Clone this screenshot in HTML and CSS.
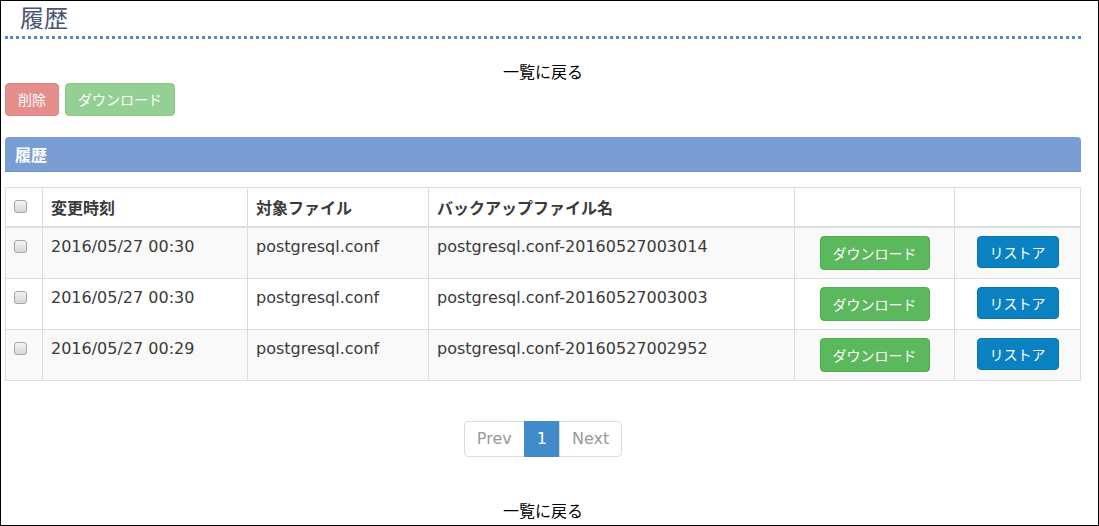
FILE: index.html
```html
<!DOCTYPE html>
<html lang="ja">
<head>
  <meta charset="UTF-8">
  <meta name="viewport" content="width=device-width, initial-scale=1.0">
  <title>履歴</title>
  <link rel="stylesheet" href="styles.css">
</head>
<body>
  <div class="page">
    <h1 class="page-title">履歴</h1>

    <div class="back"><a href="#">一覧に戻る</a></div>

    <div class="actions">
      <button class="btn btn-danger" disabled>削除</button>
      <button class="btn btn-success" disabled>ダウンロード</button>
    </div>

    <div class="panel-heading">履歴</div>

    <table class="table">
      <thead>
        <tr>
          <th class="col-check"><input type="checkbox" class="check"></th>
          <th class="col-date">変更時刻</th>
          <th class="col-file">対象ファイル</th>
          <th class="col-backup">バックアップファイル名</th>
          <th class="col-dl"></th>
          <th class="col-restore"></th>
        </tr>
      </thead>
      <tbody>
        <tr>
          <td><input type="checkbox" class="check"></td>
          <td>2016/05/27 00:30</td>
          <td>postgresql.conf</td>
          <td>postgresql.conf-20160527003014</td>
          <td class="center"><button class="btn btn-success">ダウンロード</button></td>
          <td class="center"><button class="btn btn-primary">リストア</button></td>
        </tr>
        <tr>
          <td><input type="checkbox" class="check"></td>
          <td>2016/05/27 00:30</td>
          <td>postgresql.conf</td>
          <td>postgresql.conf-20160527003003</td>
          <td class="center"><button class="btn btn-success">ダウンロード</button></td>
          <td class="center"><button class="btn btn-primary">リストア</button></td>
        </tr>
        <tr>
          <td><input type="checkbox" class="check"></td>
          <td>2016/05/27 00:29</td>
          <td>postgresql.conf</td>
          <td>postgresql.conf-20160527002952</td>
          <td class="center"><button class="btn btn-success">ダウンロード</button></td>
          <td class="center"><button class="btn btn-primary">リストア</button></td>
        </tr>
      </tbody>
    </table>

    <div class="pager">
      <ul class="pagination">
        <li><a href="#">Prev</a></li>
        <li class="active"><a href="#">1</a></li>
        <li><a href="#">Next</a></li>
      </ul>
    </div>

    <div class="back back-bottom"><a href="#">一覧に戻る</a></div>
  </div>
</body>
</html>
```

FILE: styles.css
```css
* {
  box-sizing: border-box;
}
html, body {
  margin: 0;
  padding: 0;
}
body {
  font-family: 'DejaVu Sans', 'Noto Sans CJK JP', sans-serif;
  font-size: 16px;
  line-height: 22px;
  color: #3a3a3a;
  background: #fff;
}
.page {
  width: 1099px;
  height: 526px;
  border: 1px solid #000;
  padding: 0 17px 0 4px;
  overflow: hidden;
}
.page-title {
  margin: 0;
  padding: 1px 0 4px 15px;
  font-size: 24px;
  line-height: 30px;
  font-weight: normal;
  color: #4b5670;
  font-family: 'Noto Sans CJK JP', sans-serif;
  border-bottom: 3px dotted #5b84b8;
}
.back {
  margin-top: 21px;
  height: 22px;
  text-align: center;
  font-family: 'Noto Sans CJK JP', sans-serif;
}
.back a {
  color: #000;
  text-decoration: none;
}
.back-bottom {
  margin-top: 42px;
}
.actions {
  display: flex;
  gap: 6px;
  margin-top: 1px;
}
.btn {
  display: inline-block;
  font-family: 'Noto Sans CJK JP', sans-serif;
  font-size: 14px;
  line-height: 20px;
  padding: 6px 12px;
  border: 1px solid transparent;
  border-radius: 4px;
  color: #fff;
  cursor: pointer;
  vertical-align: middle;
}
.actions .btn {
  line-height: 19px;
}
.btn[disabled] {
  opacity: 0.65;
  cursor: not-allowed;
}
.btn-danger {
  background: #d9534f;
  border-color: #d43f3a;
}
.btn-success {
  background: #5cb85c;
  border-color: #4cae4c;
}
.btn-primary {
  background: #0a82c2;
  border-color: #0876b0;
  padding: 5px 12px;
}
.panel-heading {
  margin-top: 21px;
  height: 35px;
  padding: 6px 10px;
  background: #7a9dd3;
  border-bottom: 1px solid #6d91c8;
  border-radius: 4px 4px 0 0;
  color: #fff;
  font-weight: bold;
  font-family: 'Noto Sans CJK JP', sans-serif;
}
.table {
  width: 1076px;
  margin-top: 15px;
  border-collapse: collapse;
  border: 1px solid #ddd;
}
.table th,
.table td {
  padding: 8px;
  border: 1px solid #ddd;
  text-align: left;
  vertical-align: top;
}
.table th {
  font-weight: bold;
  border-bottom: 2px solid #ddd;
  font-family: 'Noto Sans CJK JP', sans-serif;
}
.table tbody tr:nth-child(odd) {
  background: #f9f9f9;
}
.table td.center {
  text-align: center;
}
.col-check { width: 37px; }
.col-date { width: 205px; }
.col-file { width: 181px; }
.col-backup { width: 366px; }
.col-dl { width: 160px; }
.col-restore { width: 126px; }
.check {
  appearance: none;
  -webkit-appearance: none;
  width: 13px;
  height: 13px;
  margin: 4px 0 0 0;
  border: 1px solid #a6a6a6;
  border-radius: 3px;
  background: linear-gradient(#f4f4f4, #d6d6d6);
  vertical-align: top;
}
.pager {
  margin-top: 40px;
  text-align: center;
}
.pagination {
  display: inline-flex;
  margin: 0;
  padding: 0;
  list-style: none;
}
.pagination li a {
  display: block;
  padding: 6px 12px;
  line-height: 22px;
  border: 1px solid #ddd;
  margin-left: -1px;
  color: #999;
  text-decoration: none;
  background: #fff;
}
.pagination li:first-child a {
  margin-left: 0;
  border-radius: 4px 0 0 4px;
}
.pagination li:last-child a {
  border-radius: 0 4px 4px 0;
}
.pagination li.active a {
  background: #428bca;
  border-color: #428bca;
  color: #fff;
}
```
